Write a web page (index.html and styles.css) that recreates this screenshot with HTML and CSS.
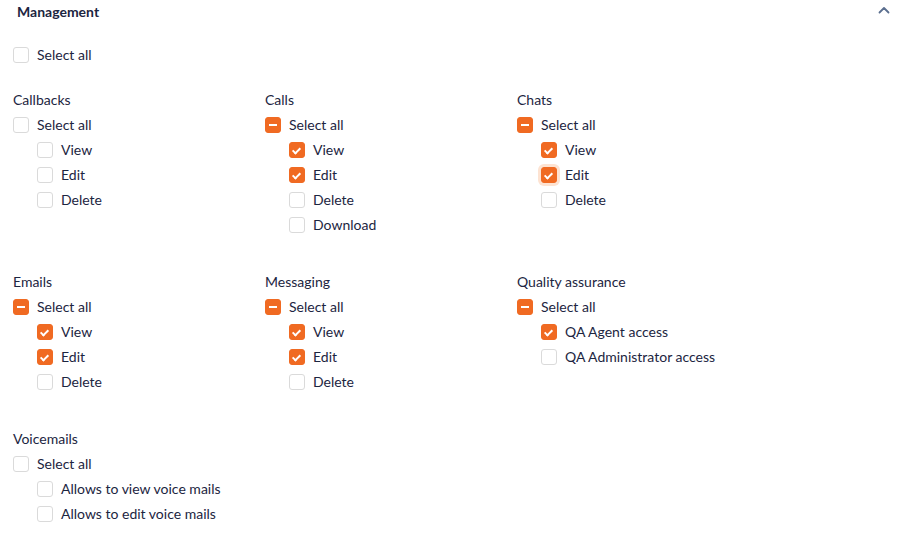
FILE: index.html
```html
<!DOCTYPE html>
<html lang="en">
<head>
  <meta charset="UTF-8" />
  <meta name="viewport" content="width=device-width, initial-scale=1" />
  <title>Management permissions</title>
  <link rel="stylesheet" href="styles.css">
</head>
<body>

  <section class="panel">
    <div class="panel-header">
      <h2>Management</h2>
      <svg class="chevron" width="12" height="8" viewBox="0 0 12 8"><path d="M1.5 6.5 L6 2 L10.5 6.5" fill="none" stroke="#5b6f8f" stroke-width="1.8" stroke-linecap="round" stroke-linejoin="round"/></svg>
    </div>

    <div class="row top-all"><span class="box"></span>Select all</div>

    <div class="groups">
      <div class="group">
        <div class="group-title">Callbacks</div>
        <div class="row"><span class="box"></span>Select all</div>
        <div class="row sub"><span class="box"></span>View</div>
        <div class="row sub"><span class="box"></span>Edit</div>
        <div class="row sub"><span class="box"></span>Delete</div>
      </div>

      <div class="group">
        <div class="group-title">Calls</div>
        <div class="row"><span class="box partial"></span>Select all</div>
        <div class="row sub"><span class="box checked"></span>View</div>
        <div class="row sub"><span class="box checked"></span>Edit</div>
        <div class="row sub"><span class="box"></span>Delete</div>
        <div class="row sub"><span class="box"></span>Download</div>
      </div>

      <div class="group">
        <div class="group-title">Chats</div>
        <div class="row"><span class="box partial"></span>Select all</div>
        <div class="row sub"><span class="box checked"></span>View</div>
        <div class="row sub"><span class="box checked focused"></span>Edit</div>
        <div class="row sub"><span class="box"></span>Delete</div>
      </div>

      <div class="group">
        <div class="group-title">Emails</div>
        <div class="row"><span class="box partial"></span>Select all</div>
        <div class="row sub"><span class="box checked"></span>View</div>
        <div class="row sub"><span class="box checked"></span>Edit</div>
        <div class="row sub"><span class="box"></span>Delete</div>
      </div>

      <div class="group">
        <div class="group-title">Messaging</div>
        <div class="row"><span class="box partial"></span>Select all</div>
        <div class="row sub"><span class="box checked"></span>View</div>
        <div class="row sub"><span class="box checked"></span>Edit</div>
        <div class="row sub"><span class="box"></span>Delete</div>
      </div>

      <div class="group">
        <div class="group-title">Quality assurance</div>
        <div class="row"><span class="box partial"></span>Select all</div>
        <div class="row sub"><span class="box checked"></span>QA Agent access</div>
        <div class="row sub"><span class="box"></span>QA Administrator access</div>
      </div>

      <div class="group">
        <div class="group-title">Voicemails</div>
        <div class="row"><span class="box"></span>Select all</div>
        <div class="row sub"><span class="box"></span>Allows to view voice mails</div>
        <div class="row sub"><span class="box"></span>Allows to edit voice mails</div>
      </div>
    </div>
  </section>

</body>
</html>
```

FILE: styles.css
```css
:root {
  --text-color: #1c2541;
  --accent-color: #f06a22;
  --border-color: #dadada;
  --font-stack: 'Lato', 'Liberation Sans', sans-serif;
}

* {
  margin: 0;
  padding: 0;
  box-sizing: border-box;
}

body {
  font-family: var(--font-stack);
  font-size: 14px;
  color: var(--text-color);
  background-color: #fff;
}

.panel {
  padding: 0 13px;
}

.panel-header {
  display: flex;
  justify-content: space-between;
  align-items: center;
  height: 24px;
  padding: 0 8px 0 4px;
}

.panel-header h2 {
  font-size: 14px;
  font-weight: bold;
  line-height: 24px;
}

.chevron {
  margin-top: -4px;
}

.row {
  display: flex;
  align-items: center;
  height: 25px;
}

.top-all {
  margin-top: 18px;
}

.row.sub {
  padding-left: 24px;
}

.groups {
  display: grid;
  grid-template-columns: repeat(3, 252px);
  row-gap: 32px;
  margin-top: 20px;
}

.group-title {
  height: 25px;
  line-height: 25px;
}

.box {
  width: 16px;
  height: 16px;
  margin-right: 8px;
  border: 1px solid var(--border-color);
  border-radius: 3px;
  flex-shrink: 0;
  position: relative;
}

.box.checked,
.box.partial {
  background-color: var(--accent-color);
  border-color: var(--accent-color);
}

.box.partial::after {
  content: "";
  position: absolute;
  left: 3px;
  top: 6px;
  width: 8px;
  height: 2px;
  background-color: #fff;
}

.box.checked::after {
  content: "";
  position: absolute;
  left: 4px;
  top: 3px;
  width: 3px;
  height: 6px;
  border: solid #fff;
  border-width: 0 2px 2px 0;
  transform: rotate(45deg);
}

.box.focused {
  box-shadow: 0 0 0 3px #fde3d2;
}
```
